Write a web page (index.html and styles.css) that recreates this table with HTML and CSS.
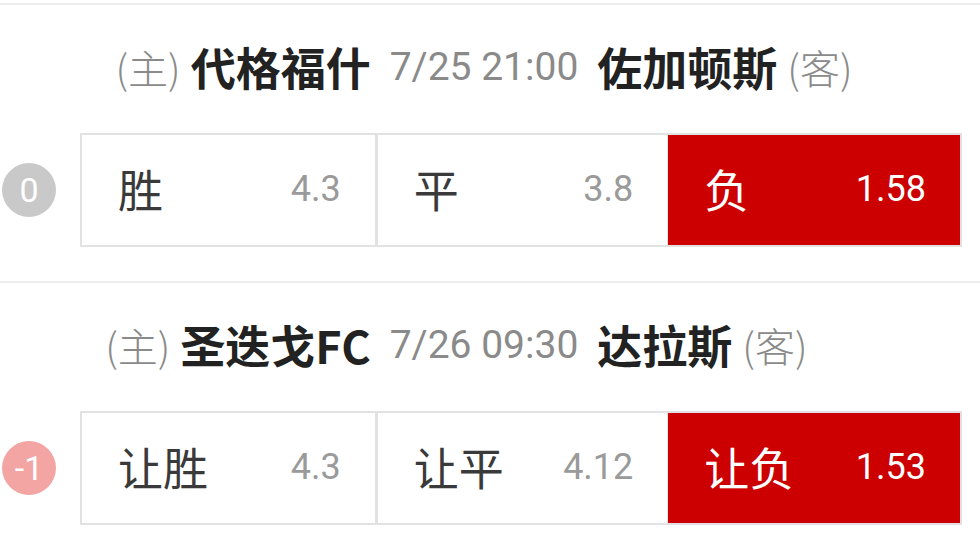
FILE: index.html
```html
<!DOCTYPE html>
<html>
	<head>
		<meta charset="utf-8">
		<title>竞彩方案</title>
		<link rel="stylesheet" href="styles.css">
	</head>
	<body>
		<div class="list">
			<div class="match">
				<div class="teams">
					<p class="home"><span class="tag">(主)</span><b>代格福什</b></p>
					<p class="time">7/25 21:00</p>
					<p class="away"><b>佐加顿斯</b><span class="tag">(客)</span></p>
				</div>
				<div class="odds">
					<span class="badge gray">0</span>
					<div class="box">
						<div class="cell"><span class="label">胜</span><span class="val">4.3</span></div>
						<div class="cell"><span class="label">平</span><span class="val">3.8</span></div>
						<div class="cell on"><span class="label">负</span><span class="val">1.58</span></div>
					</div>
				</div>
			</div>
			<div class="match">
				<div class="teams">
					<p class="home"><span class="tag">(主)</span><b>圣迭戈FC</b></p>
					<p class="time">7/26 09:30</p>
					<p class="away"><b>达拉斯</b><span class="tag">(客)</span></p>
				</div>
				<div class="odds">
					<span class="badge pink">-1</span>
					<div class="box">
						<div class="cell"><span class="label">让胜</span><span class="val">4.3</span></div>
						<div class="cell"><span class="label">让平</span><span class="val">4.12</span></div>
						<div class="cell on"><span class="label">让负</span><span class="val">1.53</span></div>
					</div>
				</div>
			</div>
		</div>
	</body>
</html>
```

FILE: styles.css
```css
body, html{
	background-color: #ffffff;
	margin: 0;
}
body{
	font-family: "Roboto", "Noto Sans CJK SC", sans-serif;
	color: #333333;
}
.list{
	padding-top: 3px;
}
.match{
	border-top: 2px solid #ececec;
	padding-bottom: 34px;
}
.teams{
	display: grid;
	grid-template-columns: 1fr auto 1fr;
	column-gap: 19px;
	align-items: center;
	height: 123px;
	padding-bottom: 5px;
	padding-right: 12px;
}
.teams p{
	margin: 0;
	display: flex;
	align-items: center;
	gap: 10px;
	white-space: nowrap;
}
.home{
	justify-content: flex-end;
}
.away{
	justify-content: flex-start;
}
.teams b{
	font-family: "Noto Sans CJK SC", sans-serif;
	font-weight: 700;
	font-size: 45px;
	color: #222222;
}
.tag{
	font-family: "Noto Sans CJK SC", sans-serif;
	font-weight: 300;
	font-size: 40px;
	color: #8a8a8a;
}
.time{
	font-size: 39px;
	color: #8a8a8a;
}
.odds{
	display: flex;
	align-items: center;
	padding-left: 2px;
	padding-right: 18px;
	gap: 24px;
}
.badge{
	width: 54px;
	height: 54px;
	border-radius: 50%;
	flex: none;
	display: flex;
	align-items: center;
	justify-content: center;
	color: #ffffff;
	font-size: 34px;
}
.gray{
	background-color: #c9c9c9;
}
.pink{
	background-color: #f3a5a3;
}
.box{
	flex: 1;
	display: grid;
	grid-template-columns: 1fr 1fr 1fr;
	border: 2px solid #e2e2e2;
	height: 110px;
}
.cell{
	display: flex;
	align-items: center;
	justify-content: space-between;
	padding: 0 34px 3px 36px;
	border-left: 3px solid #e2e2e2;
}
.cell:first-child{
	border-left: none;
}
.label{
	font-family: "Noto Sans CJK SC", sans-serif;
	font-size: 45px;
	color: #3a3a3a;
}
.val{
	font-size: 36px;
	color: #9a9a9a;
}
.on{
	background-color: #cc0000;
	border-left: 1px solid #e2e2e2;
}
.on .label, .on .val{
	color: #ffffff;
}
```
